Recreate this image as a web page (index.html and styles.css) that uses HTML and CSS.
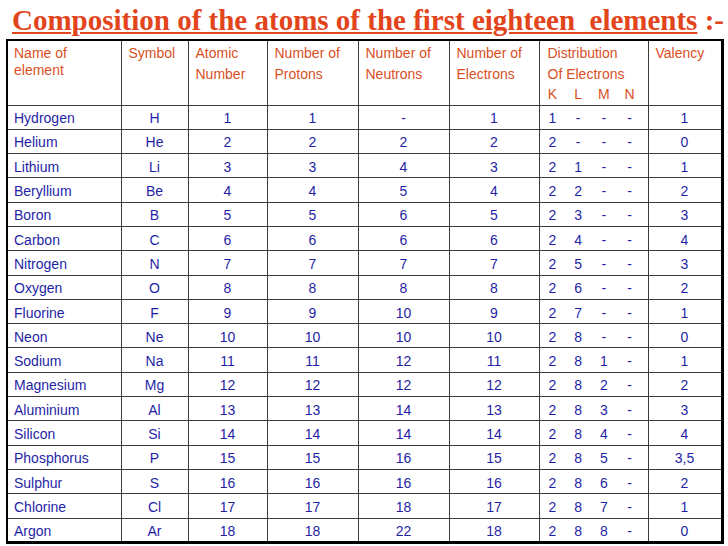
FILE: index.html
```html
<!DOCTYPE html>
<html>
<head>
<meta charset="utf-8">
<link rel="stylesheet" href="styles.css">
</head>
<body>
<h1 class="title"><span class="ul">Composition of the atoms of the first eighteen&nbsp; elements</span> :-</h1>
<table class="tbl">
  <colgroup>
    <col class="c1"><col class="c2"><col class="c3"><col class="c4"><col class="c5"><col class="c6"><col class="c7"><col class="c8">
  </colgroup>
  <thead>
    <tr class="head">
      <th class="tight">Name of<br>element</th>
      <th>Symbol</th>
      <th>Atomic<br>Number</th>
      <th>Number of<br>Protons</th>
      <th>Number of<br>Neutrons</th>
      <th>Number of<br>Electrons</th>
      <th class="dist-h">Distribution<br>Of Electrons<br><span class="shells hshells"><span>K</span><span>L</span><span>M</span><span>N</span></span></th>
      <th>Valency</th>
    </tr>
  </thead>
  <tbody id="rows"></tbody>
</table>
<script src="app.js"></script>
</body>
</html>
```
FILE: app.js
```js
var data = [
  ["Hydrogen","H","1","1","-","1",["1","-","-","-"],"1"],
  ["Helium","He","2","2","2","2",["2","-","-","-"],"0"],
  ["Lithium","Li","3","3","4","3",["2","1","-","-"],"1"],
  ["Beryllium","Be","4","4","5","4",["2","2","-","-"],"2"],
  ["Boron","B","5","5","6","5",["2","3","-","-"],"3"],
  ["Carbon","C","6","6","6","6",["2","4","-","-"],"4"],
  ["Nitrogen","N","7","7","7","7",["2","5","-","-"],"3"],
  ["Oxygen","O","8","8","8","8",["2","6","-","-"],"2"],
  ["Fluorine","F","9","9","10","9",["2","7","-","-"],"1"],
  ["Neon","Ne","10","10","10","10",["2","8","-","-"],"0"],
  ["Sodium","Na","11","11","12","11",["2","8","1","-"],"1"],
  ["Magnesium","Mg","12","12","12","12",["2","8","2","-"],"2"],
  ["Aluminium","Al","13","13","14","13",["2","8","3","-"],"3"],
  ["Silicon","Si","14","14","14","14",["2","8","4","-"],"4"],
  ["Phosphorus","P","15","15","16","15",["2","8","5","-"],"3,5"],
  ["Sulphur","S","16","16","16","16",["2","8","6","-"],"2"],
  ["Chlorine","Cl","17","17","18","17",["2","8","7","-"],"1"],
  ["Argon","Ar","18","18","22","18",["2","8","8","-"],"0"]
];
var tb = document.getElementById("rows");
data.forEach(function (r) {
  var tr = document.createElement("tr");
  tr.className = "row";
  for (var i = 0; i < 8; i++) {
    var td = document.createElement("td");
    if (i === 0) {
      td.className = "left";
      td.textContent = r[i];
    } else if (i === 6) {
      td.className = "dist";
      var s = document.createElement("span");
      s.className = "shells";
      r[i].forEach(function (v) {
        var sp = document.createElement("span");
        sp.textContent = v;
        s.appendChild(sp);
      });
      td.appendChild(s);
    } else {
      td.className = "center";
      td.textContent = r[i];
    }
    tr.appendChild(td);
  }
  tb.appendChild(tr);
});
```
FILE: styles.css
```css
html, body {
  margin: 0;
  padding: 0;
  background: #ffffff;
}
.title {
  margin: 0;
  height: 39px;
  padding-left: 12px;
  padding-top: 6px;
  box-sizing: border-box;
  font-family: "Liberation Serif", "Times New Roman", serif;
  font-weight: bold;
  font-size: 29px;
  line-height: 28px;
  color: #e2441c;
  white-space: nowrap;
  overflow: hidden;
}
.title .ul {
  text-decoration: underline;
  text-decoration-thickness: 2px;
  text-underline-offset: 2px;
}
.tbl {
  margin-left: 6px;
  border-collapse: collapse;
  table-layout: fixed;
  width: 717px;
  border: 2px solid #000;
  border-right-width: 3px;
  border-bottom-width: 3px;
  font-family: "Liberation Sans", Arial, sans-serif;
  font-size: 14px;
}
.c1 { width: 114px; }
.c2 { width: 67px; }
.c3 { width: 79px; }
.c4 { width: 91px; }
.c5 { width: 91px; }
.c6 { width: 90px; }
.c7 { width: 109px; }
.c8 { width: 74px; }
.tbl th, .tbl td {
  border: 1.5px solid #3a3a3a;
  padding: 0 5px;
  overflow: hidden;
  white-space: nowrap;
}
.head {
  height: 65px;
}
.head th {
  vertical-align: top;
  font-weight: normal;
  color: #d9501f;
  line-height: 20.5px;
  padding-top: 2px;
  padding-left: 7px;
  text-align: left;
}
.head th.tight {
  line-height: 17px;
  padding-top: 4px;
  padding-left: 6px;
}
.head th.dist-h {
  padding-left: 8px;
}
.row {
  height: 24.3px;
}
.row td {
  padding-top: 2px;
  padding-bottom: 0;
  line-height: 16px;
  color: #1f1fa6;
  vertical-align: middle;
}
.row td.left {
  text-align: left;
  padding-left: 6px;
}
.row td.center {
  text-align: center;
}
.row td.dist {
  padding-left: 0;
}
.shells {
  display: flex;
}
.shells span {
  width: 26px;
  text-align: center;
}
.hshells {
  margin-left: -8px;
}
```
